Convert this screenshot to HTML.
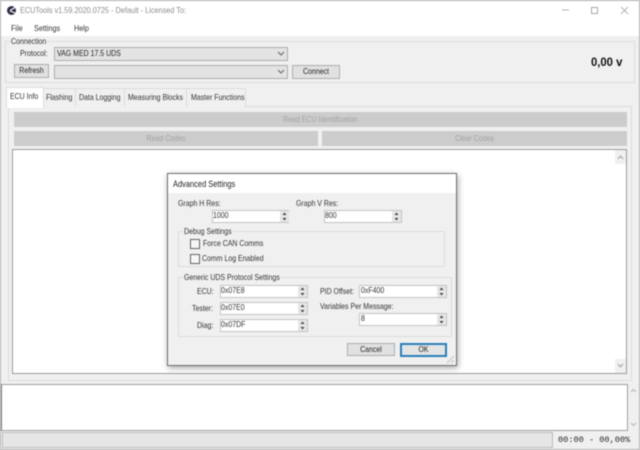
<!DOCTYPE html>
<html>
<head>
<meta charset="utf-8">
<style>
html,body{margin:0;padding:0;background:#f0f0f0}
#w{position:relative;width:640px;height:450px;overflow:hidden;background:#f0f0f0;font-family:"Liberation Sans",sans-serif;font-size:8.5px;color:#333;filter:blur(0.4px)}
#w div{position:absolute;box-sizing:border-box;white-space:nowrap}
.btn{background:#e1e1e1;border:1px solid #adadad}
.combo{background:#e3e3e3;border:1px solid #adadad}
.dis{background:#cccccc}
.tab{background:#f0f0f0;border:1px solid #dcdcdc;border-bottom:none;top:88px;height:19px}
.g{border:1px solid #dcdcdc}
.t{color:#333;line-height:11px;transform:scaleX(.82);transform-origin:0 50%}
.tc{color:#222;line-height:11px;text-align:center;transform:scaleX(.82);transform-origin:50% 50%}
.gr{color:#a2a2a2}
.inp{background:#fff;border:1px solid #c4c4c4;height:13px}
.sp{background:#e6e6e6;width:9px;height:11px}
.cb{width:10px;height:10px;background:#f6f6f6;border:1px solid #666}
</style>
</head>
<body>
<div id="w">
<div style="left:0;top:0;width:640px;height:36px;background:#fff"></div>
<div style="left:0;top:0;width:640px;height:1px;background:#b0b0b0"></div>
<div style="left:0;top:0;width:1px;height:450px;background:#b0b0b0"></div>
<div style="left:639px;top:0;width:1px;height:450px;background:#b0b0b0"></div>
<div style="left:0;top:449px;width:640px;height:1px;background:#b0b0b0"></div>

<svg style="position:absolute;left:6px;top:5px" width="11" height="11" viewBox="0 0 11 11"><circle cx="5.5" cy="5.5" r="4.5" fill="#2e2e48"/><path d="M4 5.5L9 2.5M4 6L9 8" stroke="#fff" stroke-width="1.2"/></svg>
<div class="t" style="left:20px;top:4px;color:#8c8c8c;line-height:12px;transform:scaleX(.86)">ECUTools v1.59.2020.0725 - Default - Licensed To:</div>
<svg style="position:absolute;left:560px;top:3px" width="76" height="14" viewBox="0 0 76 14"><path d="M2 7H9" stroke="#b4b4b4"/><path d="M31.500 4.500H37.500V10.500H31.500Z" fill="none" stroke="#a8a8a8"/><path d="M61 4L68 11M68 4L61 11" stroke="#b4b4b4"/></svg>

<div class="t" style="left:11px;top:22px;line-height:12px;transform:scaleX(.85)">File</div>
<div class="t" style="left:34px;top:22px;line-height:12px;transform:scaleX(.85)">Settings</div>
<div class="t" style="left:74px;top:22px;line-height:12px;transform:scaleX(.85)">Help</div>

<div class="g" style="left:5px;top:41px;width:630px;height:42px"></div>
<div style="left:11px;top:38px;width:36px;height:8px;background:#f0f0f0"></div>
<div class="t" style="left:11px;top:36px">Connection</div>
<div class="t" style="left:20px;top:48px">Protocol:</div>
<div class="combo" style="left:54px;top:47px;width:234px;height:14px"></div>
<div class="t" style="left:57px;top:48px;color:#222">VAG MED 17.5 UDS</div>
<div class="btn" style="left:14px;top:64px;width:35px;height:14px"></div>
<div class="tc" style="left:14px;top:65px;width:35px">Refresh</div>
<div class="combo" style="left:54px;top:65px;width:234px;height:14px"></div>
<svg style="position:absolute;left:277px;top:50px" width="8" height="28" viewBox="0 0 8 28"><path d="M1 2L4 5L7 2M1 20L4 23L7 20" fill="none" stroke="#666"/></svg>
<div class="btn" style="left:292px;top:65px;width:48px;height:14px"></div>
<div class="tc" style="left:292px;top:66px;width:48px">Connect</div>
<div style="left:591px;top:55px;font-size:12px;font-weight:bold;color:#111;line-height:14px;transform:scaleX(.94);transform-origin:0 50%">0,00 v</div>

<div style="left:8px;top:106px;width:624px;height:275px;border:1px solid #dcdcdc"></div>
<div class="tab" style="left:43px;width:33px"></div>
<div class="tab" style="left:75px;width:50px"></div>
<div class="tab" style="left:124px;width:63px"></div>
<div class="tab" style="left:186px;width:60px"></div>
<div class="tab" style="left:6px;width:38px;top:87px;height:21px;background:#fff"></div>
<div class="t" style="left:10px;top:91px">ECU Info</div>
<div class="t" style="left:46px;top:92px">Flashing</div>
<div class="t" style="left:79px;top:92px">Data Logging</div>
<div class="t" style="left:128px;top:92px">Measuring Blocks</div>
<div class="t" style="left:191px;top:92px">Master Functions</div>

<div class="dis" style="left:14px;top:112px;width:613px;height:15px"></div>
<div class="tc gr" style="left:14px;top:114px;width:613px;transform:none"><span style="display:inline-block;transform:scaleX(.82)">Read ECU Identification</span></div>
<div class="dis" style="left:14px;top:131px;width:304px;height:15px"></div>
<div class="tc gr" style="left:14px;top:133px;width:304px">Read Codes</div>
<div class="dis" style="left:322px;top:131px;width:305px;height:15px"></div>
<div class="tc gr" style="left:322px;top:133px;width:305px">Clear Codes</div>

<div style="left:12px;top:149px;width:615px;height:225px;background:#fff;border:1px solid #9a9a9a"></div>
<svg style="position:absolute;left:615px;top:150px" width="11" height="223" viewBox="0 0 11 223"><rect width="11" height="223" fill="#fff"/><rect width="11" height="14" fill="#f0f0f0"/><rect y="209" width="11" height="14" fill="#f0f0f0"/><path d="M3 9L5.500 6L8 9M3 214L5.500 217L8 214" fill="none" stroke="#a0a0a0"/></svg>

<div style="left:1px;top:384px;width:627px;height:47px;background:#fff;border:1px solid #a0a0a0;border-left-color:#808080"></div>
<svg style="position:absolute;left:628px;top:384px" width="11" height="47" viewBox="0 0 11 47"><rect width="11" height="47" fill="#f0f0f0"/><path d="M3 8L5.500 5.500L8 8M3 39L5.500 41.500L8 39" fill="none" stroke="#b4b4b4"/></svg>
<div style="left:2px;top:432px;width:551px;height:16px;background:#e6e6e6;border:1px solid #bcbcbc"></div>
<div style="left:558px;top:434px;font-family:'Liberation Mono',monospace;font-size:8.6px;line-height:12px;color:#222">00:00 - 00,00%</div>

<!-- dialog -->
<div style="left:167px;top:173px;width:290px;height:193px;background:#f0f0f0;border:1px solid #6e6e6e;box-shadow:1px 2px 6px rgba(0,0,0,.35)"></div>
<div style="left:168px;top:174px;width:288px;height:19px;background:#fff"></div>
<div class="t" style="left:173px;top:178px;font-size:9px;line-height:12px;color:#222;transform:scaleX(.83)">Advanced Settings</div>

<div class="t" style="left:178px;top:198px">Graph H Res:</div>
<div class="t" style="left:296px;top:198px">Graph V Res:</div>
<div class="inp" style="left:212px;top:210px;width:77px"></div><div class="sp" style="left:280px;top:211px"></div>
<div class="t" style="left:213px;top:210px">1000</div>
<div class="inp" style="left:324px;top:210px;width:78px"></div><div class="sp" style="left:392px;top:211px"></div>
<div class="t" style="left:325px;top:210px">800</div>

<div class="g" style="left:178px;top:231px;width:267px;height:36px"></div>
<div style="left:183px;top:228px;width:50px;height:7px;background:#f0f0f0"></div>
<div class="t" style="left:184px;top:226px">Debug Settings</div>
<div class="cb" style="left:190px;top:239px"></div>
<div class="t" style="left:203px;top:238px">Force CAN Comms</div>
<div class="cb" style="left:190px;top:254px"></div>
<div class="t" style="left:202px;top:253px">Comm Log Enabled</div>

<div class="g" style="left:178px;top:277px;width:274px;height:60px"></div>
<div style="left:183px;top:274px;width:97px;height:7px;background:#f0f0f0"></div>
<div class="t" style="left:184px;top:272px">Generic UDS Protocol Settings</div>
<div class="t" style="left:197px;top:286px">ECU:</div>
<div class="t" style="left:192px;top:303px">Tester:</div>
<div class="t" style="left:197px;top:320px">Diag:</div>
<div class="inp" style="left:220px;top:285px;width:88px"></div><div class="sp" style="left:298px;top:286px"></div>
<div class="t" style="left:221px;top:285px">0x07E8</div>
<div class="inp" style="left:220px;top:302px;width:88px"></div><div class="sp" style="left:298px;top:303px"></div>
<div class="t" style="left:221px;top:302px">0x07E0</div>
<div class="inp" style="left:220px;top:319px;width:88px"></div><div class="sp" style="left:298px;top:320px"></div>
<div class="t" style="left:221px;top:319px">0x07DF</div>

<div class="t" style="left:320px;top:286px">PID Offset:</div>
<div class="inp" style="left:359px;top:285px;width:88px"></div><div class="sp" style="left:437px;top:286px"></div>
<div class="t" style="left:361px;top:285px">0xF400</div>
<div class="t" style="left:320px;top:301px">Variables Per Message:</div>
<div class="inp" style="left:359px;top:313px;width:88px"></div><div class="sp" style="left:437px;top:314px"></div>
<div class="t" style="left:361px;top:313px">8</div>

<svg style="position:absolute;left:0;top:0" width="640" height="450" viewBox="0 0 640 450" fill="#444"><path d="M282.500 215h4l-2-2.500zM282.500 218h4l-2 2.500zM394.500 215h4l-2-2.500zM394.500 218h4l-2 2.500zM300.500 290h4l-2-2.500zM300.500 293h4l-2 2.500zM300.500 307h4l-2-2.500zM300.500 310h4l-2 2.500zM300.500 324h4l-2-2.500zM300.500 327h4l-2 2.500zM439.500 290h4l-2-2.500zM439.500 293h4l-2 2.500zM439.500 318h4l-2-2.500zM439.500 321h4l-2 2.500z"/><path d="M447 363l7-7M451 363l3-3" stroke="#c4c4c4" fill="none"/></svg>

<div class="btn" style="left:347px;top:343px;width:48px;height:13px"></div>
<div class="tc" style="left:347px;top:344px;width:48px">Cancel</div>
<div class="btn" style="left:400px;top:343px;width:47px;height:14px;border:2px solid #2a7fba;background:#e4e4e4"></div>
<div class="tc" style="left:400px;top:344px;width:47px">OK</div>
</div>
</body>
</html>
